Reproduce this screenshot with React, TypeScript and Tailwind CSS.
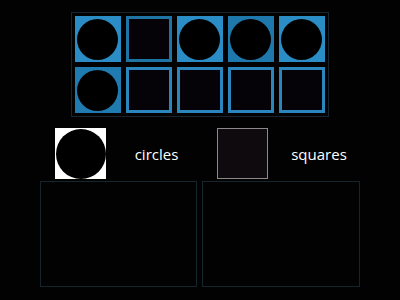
const top = [
  ["circle", "#2a8dc5"],
  ["square", "#1f74a6"],
  ["circle", "#2a8dc5"],
  ["circle", "#1f78ac"],
  ["circle", "#2a8dc5"],
  ["circle", "#1f7bb0"],
  ["square", "#2a86bd"],
  ["square", "#2a86bd"],
  ["square", "#2a86bd"],
  ["square", "#2a86bd"],
];

const Cell = ({ kind, color }: { kind: string; color: string }) => {
  if (kind === "circle") {
    return (
      <div className="w-[46px] h-[46px] flex items-center justify-center" style={{ backgroundColor: color }}>
        <div className="w-[41px] h-[41px] rounded-full bg-black" />
      </div>
    );
  }
  return (
    <div className="w-[46px] h-[46px] border-[3px] bg-[#050307]" style={{ borderColor: color }} />
  );
};

export default function App() {
  return (
    <div
      className="w-[400px] h-[300px] bg-[#020203] text-white flex flex-col items-center overflow-hidden"
      style={{ fontFamily: '"Open Sans", sans-serif' }}
    >
      <div className="mt-[12px] ml-[-1px] border border-[#18252e] p-[3px] grid grid-cols-5 gap-[5px]">
        {top.map(([kind, color], i) => (
          <Cell key={i} kind={kind} color={color} />
        ))}
      </div>

      <div className="mt-[11px] w-[320px] flex gap-[5px]">
        <div className="w-[157px] flex items-center pl-[15px]">
          <div className="w-[51px] h-[51px] bg-white flex items-center justify-center">
            <div className="w-[50px] h-[50px] rounded-full bg-black" />
          </div>
          <div className="flex-1 text-center pl-[10px] text-[15px] leading-[20px]">circles</div>
        </div>
        <div className="w-[158px] flex items-center pl-[15px]">
          <div className="w-[51px] h-[51px] border border-[#8a8a8a] bg-[#0e0a0d]" />
          <div className="flex-1 text-center pl-[10px] text-[15px] leading-[20px]">squares</div>
        </div>
      </div>

      <div className="mt-[2px] w-[320px] flex gap-[5px]">
        <div className="w-[157px] h-[106px] border border-[#16242b]" />
        <div className="w-[158px] h-[106px] border border-[#16242b]" />
      </div>
    </div>
  );
}
